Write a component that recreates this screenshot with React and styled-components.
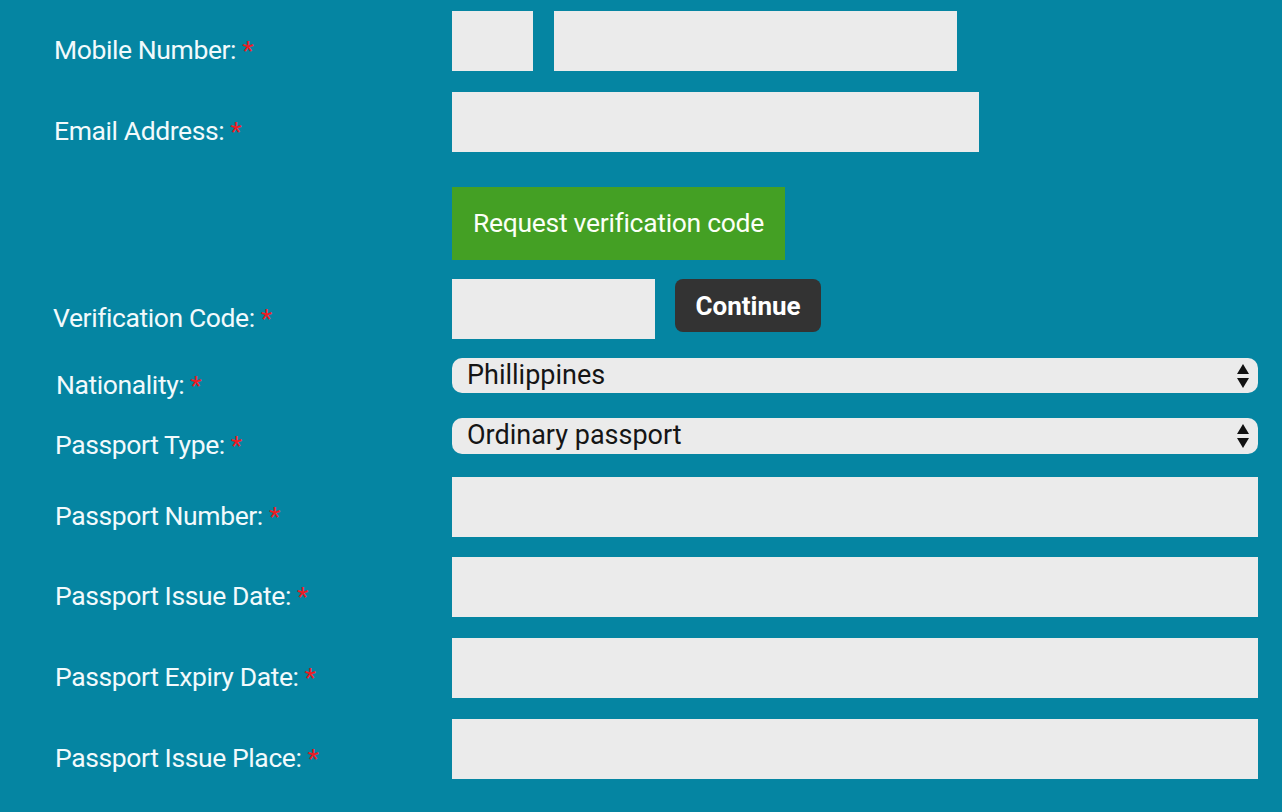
import React from "react";
import styled, { createGlobalStyle } from "styled-components";

const GlobalStyle = createGlobalStyle`
  html, body {
    margin: 0;
    padding: 0;
    background: #0585a2;
  }

  body {
    font-family: Roboto, "Liberation Sans", sans-serif;
  }
`;

const Page = styled.div`
  width: 1282px;
  height: 812px;
  overflow: hidden;
  background: #0585a2;
  padding: 11px 24px 0 54px;
  box-sizing: border-box;
`;

const Form = styled.form`
  display: flex;
  flex-direction: column;
`;

const Row = styled.div`
  display: flex;
  align-items: center;
  margin-top: ${(props) => props.gap || 0}px;
`;

// label sits ~9px below the field centre, without growing the row
const Label = styled.label`
  width: ${(props) => 398 - (props.indent || 0)}px;
  margin: 9px 0 -9px ${(props) => props.indent || 0}px;
  flex-shrink: 0;
  color: #f2fafc;
  font-size: 26.5px;
  font-weight: 400;
  letter-spacing: -0.4px;
  line-height: 30px;
  white-space: nowrap;
`;

const Star = styled.span`
  color: #ee1c24;
  margin-left: 6px;
`;

const Fields = styled.div`
  display: flex;
  align-items: flex-start;
  gap: ${(props) => props.gap || 20}px;
  flex: 1;
`;

const TextInput = styled.input`
  width: ${(props) => (props.w ? `${props.w}px` : "100%")};
  height: 60px;
  box-sizing: border-box;
  border: none;
  background: #ebebeb;
  outline: none;
  padding: 0 12px;
  font-family: inherit;
  font-size: 22px;
`;

const GreenButton = styled.button`
  margin-left: 398px;
  width: 333px;
  height: 73px;
  border: none;
  background: #44a024;
  color: #fbfff6;
  font-family: inherit;
  font-size: 26.5px;
  font-weight: 400;
  letter-spacing: -0.3px;
  padding: 0 0 2px;
  cursor: pointer;
`;

const DarkButton = styled.button`
  width: 146px;
  height: 53px;
  border: none;
  border-radius: 8px;
  background: #333333;
  color: #ffffff;
  font-family: inherit;
  font-size: 26px;
  font-weight: 700;
  cursor: pointer;
`;

const SelectWrap = styled.div`
  position: relative;
  flex: 1;
  height: ${(props) => props.h}px;
`;

const Select = styled.select`
  appearance: none;
  width: 100%;
  height: 100%;
  border: none;
  border-radius: 10px;
  background: #ebebeb;
  color: #151515;
  font-family: inherit;
  font-size: 27px;
  font-weight: 400;
  padding: 0 40px 2px 15px;
  outline: none;
`;

const Arrows = styled.svg`
  position: absolute;
  right: 8px;
  top: 50%;
  transform: translateY(-50%);
  pointer-events: none;
`;

const SelectField = ({ value, h }) => (
  <SelectWrap h={h}>
    <Select defaultValue={value}>
      <option>{value}</option>
    </Select>
    <Arrows width="14" height="26" viewBox="0 0 14 26">
      <path d="M7 1 L13 11 L1 11 Z" fill="#111" />
      <path d="M7 25 L13 15 L1 15 Z" fill="#111" />
    </Arrows>
  </SelectWrap>
);

const Req = ({ children, indent }) => (
  <Label indent={indent}>
    {children}
    <Star>*</Star>
  </Label>
);

const App = () => {
  return (
    <Page>
      <GlobalStyle />
      <Form onSubmit={(e) => e.preventDefault()}>
        <Row>
          <Req>Mobile Number:</Req>
          <Fields gap={21}>
            <TextInput w={81} />
            <TextInput w={403} />
          </Fields>
        </Row>
        <Row gap={21}>
          <Req>Email Address:</Req>
          <Fields>
            <TextInput w={527} />
          </Fields>
        </Row>
        <Row gap={35}>
          <GreenButton type="button">Request verification code</GreenButton>
        </Row>
        <Row gap={19}>
          <Req indent={-1}>Verification Code:</Req>
          <Fields gap={20}>
            <TextInput w={203} />
            <DarkButton type="button">Continue</DarkButton>
          </Fields>
        </Row>
        <Row gap={19}>
          <Req indent={2}>Nationality:</Req>
          <SelectField value="Phillippines" h={35} />
        </Row>
        <Row gap={25}>
          <Req indent={1}>Passport Type:</Req>
          <SelectField value="Ordinary passport" h={36} />
        </Row>
        <Row gap={23}>
          <Req indent={1}>Passport Number:</Req>
          <Fields>
            <TextInput />
          </Fields>
        </Row>
        <Row gap={20}>
          <Req indent={1}>Passport Issue Date:</Req>
          <Fields>
            <TextInput />
          </Fields>
        </Row>
        <Row gap={21}>
          <Req indent={1}>Passport Expiry Date:</Req>
          <Fields>
            <TextInput />
          </Fields>
        </Row>
        <Row gap={21}>
          <Req indent={1}>Passport Issue Place:</Req>
          <Fields>
            <TextInput />
          </Fields>
        </Row>
      </Form>
    </Page>
  );
};

export default App;
